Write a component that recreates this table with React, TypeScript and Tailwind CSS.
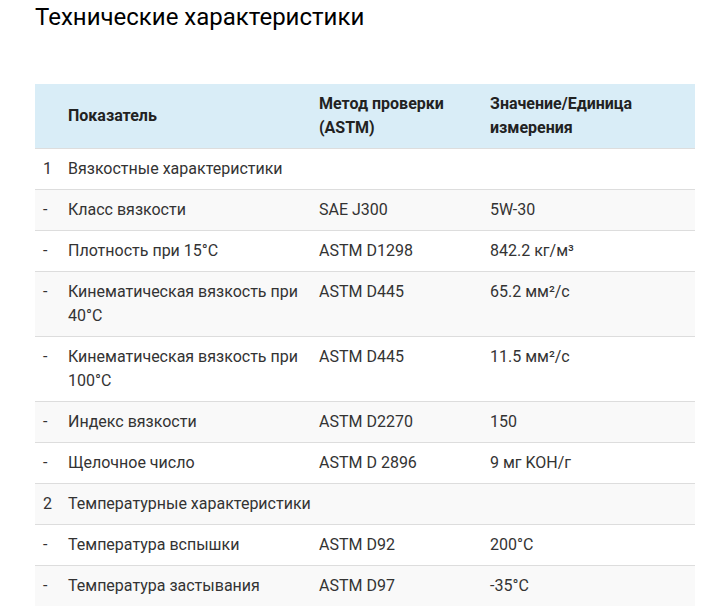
const rows = [
  { n: "1", name: "Вязкостные характеристики", method: "", value: "", group: true },
  { n: "-", name: "Класс вязкости", method: "SAE J300", value: "5W-30" },
  { n: "-", name: "Плотность при 15°C", method: "ASTM D1298", value: "842.2 кг/м³" },
  { n: "-", name: "Кинематическая вязкость при 40°C", method: "ASTM D445", value: "65.2 мм²/с" },
  { n: "-", name: "Кинематическая вязкость при 100°C", method: "ASTM D445", value: "11.5 мм²/с" },
  { n: "-", name: "Индекс вязкости", method: "ASTM D2270", value: "150" },
  { n: "-", name: "Щелочное число", method: "ASTM D 2896", value: "9 мг KOH/г" },
  { n: "2", name: "Температурные характеристики", method: "", value: "", group: true },
  { n: "-", name: "Температура вспышки", method: "ASTM D92", value: "200°C" },
  { n: "-", name: "Температура застывания", method: "ASTM D97", value: "-35°C" },
];

export default function App() {
  return (
    <div className="min-h-screen bg-white px-[35px] font-['Roboto',sans-serif]">
      <h2 className="pt-[1px] text-[24px] leading-[32px] font-normal text-black">
        Технические характеристики
      </h2>

      <table className="mt-[51px] w-[660px] table-fixed border-collapse text-[16px] leading-6 text-[#333]">
        <colgroup>
          <col className="w-[25px]" />
          <col className="w-[251px]" />
          <col className="w-[171px]" />
          <col className="w-[213px]" />
        </colgroup>
        <thead>
          <tr className="bg-[#d9edf7] text-[#222]">
            <th className="h-[64px] px-2 py-2" />
            <th className="px-2 py-2 text-left font-bold">Показатель</th>
            <th className="px-2 py-2 text-left font-bold">Метод проверки (ASTM)</th>
            <th className="px-2 py-2 text-left font-bold">Значение/Единица измерения</th>
          </tr>
        </thead>
        <tbody>
          {rows.map((r, i) => (
            <tr
              key={i}
              className={`border-t border-[#dddddd] align-top ${i % 2 === 1 ? "bg-[#f9f9f9]" : "bg-white"}`}
            >
              <td className="py-2 pl-2 pr-0">{r.n}</td>
              {r.group ? (
                <td colSpan={3} className="px-2 py-2">{r.name}</td>
              ) : (
                <>
                  <td className="px-2 py-2">{r.name}</td>
                  <td className="px-2 py-2">{r.method}</td>
                  <td className="px-2 py-2">{r.value}</td>
                </>
              )}
            </tr>
          ))}
        </tbody>
      </table>
    </div>
  );
}
